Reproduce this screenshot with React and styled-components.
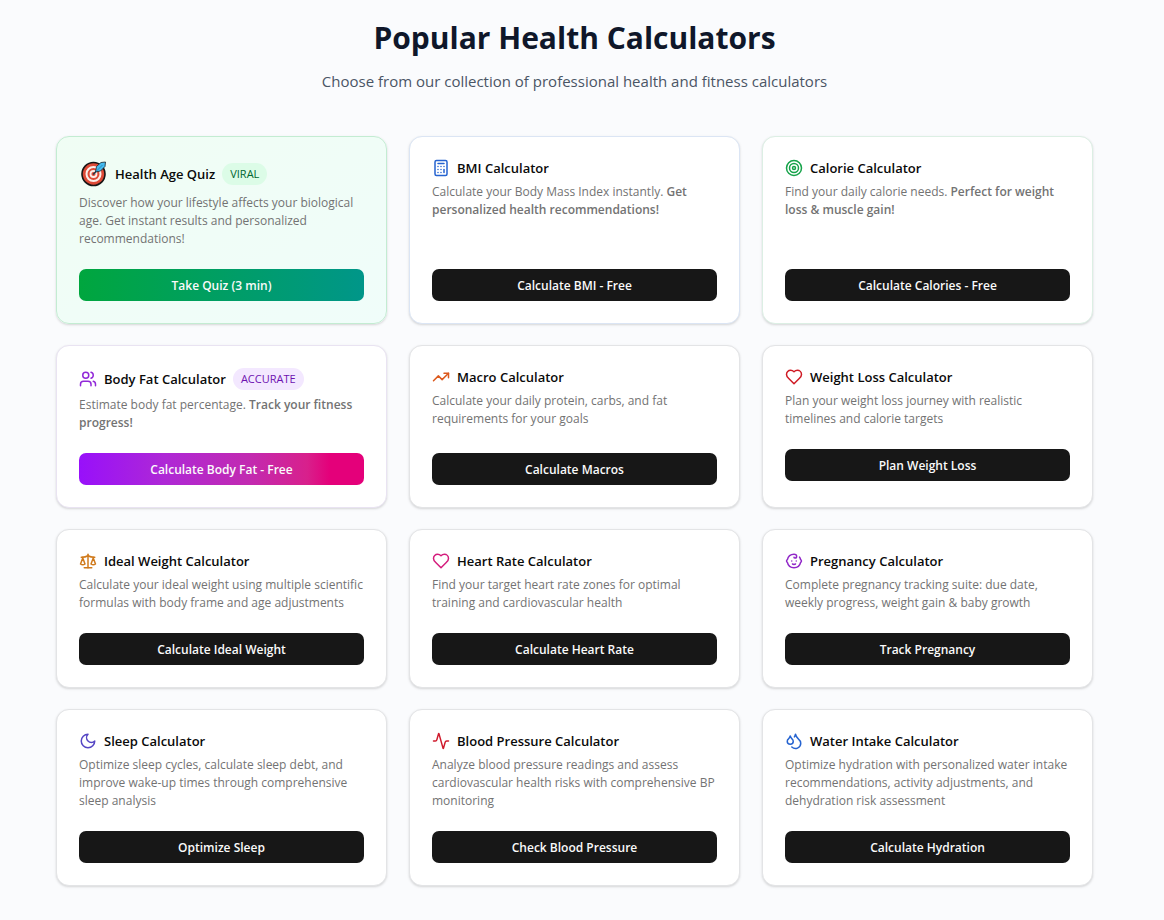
import styled, { createGlobalStyle } from "styled-components";
import {
  Activity,
  Baby,
  Calculator,
  Droplets,
  Scale,
  Target,
  TrendingUp,
  Users,
} from "lucide-react";

const GlobalStyle = createGlobalStyle`
  *, *::before, *::after {
    box-sizing: border-box;
  }

  body {
    margin: 0;
    min-height: 100vh;
    background: #fafbfd;
    font-family: "Segoe UI", "Open Sans", "Noto Sans", sans-serif;
  }
`;

const Section = styled.section`
  padding: 16px 71px 34px 56px;
`;

const Header = styled.header`
  margin-bottom: 43px;
  text-align: center;
`;

const Heading = styled.h2`
  margin: 0 0 9px;
  color: #0f172a;
  font-size: 30px;
  font-weight: 700;
  line-height: 44px;
`;

const Lead = styled.p`
  margin: 0;
  color: #4a5565;
  font-size: 15px;
  line-height: 24px;
`;

const Grid = styled.div`
  display: grid;
  grid-template-columns: repeat(3, minmax(0, 1fr));
  gap: 21px 22px;

  @media (max-width: 900px) {
    grid-template-columns: repeat(2, minmax(0, 1fr));
  }

  @media (max-width: 600px) {
    grid-template-columns: minmax(0, 1fr);
  }
`;

const Card = styled.article`
  display: flex;
  flex-direction: column;
  gap: 21px;
  padding: 22px;
  border: 1px solid ${(p) => p.$border || "#e3e4e6"};
  border-radius: 13px;
  background: ${(p) => p.$background || "#ffffff"};
  box-shadow: 0 1px 3px rgba(0, 0, 0, 0.1), 0 1px 2px rgba(0, 0, 0, 0.06);
`;

const CardText = styled.div`
  display: flex;
  flex-direction: column;
  gap: 6px;
  flex: ${(p) => (p.$grow ? 1 : "none")};
`;

const TitleRow = styled.h3`
  display: flex;
  align-items: center;
  gap: 7px;
  margin: 0;
  color: #0a0a0a;
  font-size: 13px;
  font-weight: 600;
  line-height: 18px;

  svg {
    flex: none;
  }
`;

const Badge = styled.span`
  padding: 2px 8px;
  border-radius: 11px;
  background: ${(p) => p.$background};
  color: ${(p) => p.$color};
  font-size: 11px;
  font-weight: 500;
  line-height: 18px;
`;

const Description = styled.p`
  margin: 0;
  color: #737373;
  font-size: 12px;
  line-height: 18px;

  strong {
    font-weight: 600;
  }
`;

const Button = styled.button`
  height: 32px;
  padding: 1px 14px 0;
  border: 0;
  border-radius: 7px;
  background: ${(p) => p.$background || "#171717"};
  color: #fafafa;
  font-family: inherit;
  font-size: 12px;
  font-weight: 600;
  line-height: 18px;
  cursor: pointer;
`;

function Heart({ color }) {
  return (
    <svg
      width="18"
      height="18"
      viewBox="0 0 24 24"
      fill="none"
      stroke={color}
      strokeWidth="2"
      strokeLinecap="round"
      strokeLinejoin="round"
    >
      <path d="M19 14c1.49-1.46 3-3.21 3-5.5A5.5 5.5 0 0 0 16.5 3c-1.76 0-3 .5-4.5 2-1.5-1.5-2.74-2-4.5-2A5.5 5.5 0 0 0 2 8.5c0 2.3 1.5 4.05 3 5.5l7 7Z" />
    </svg>
  );
}

function Moon({ color }) {
  return (
    <svg
      width="18"
      height="18"
      viewBox="0 0 24 24"
      fill="none"
      stroke={color}
      strokeWidth="2"
      strokeLinecap="round"
      strokeLinejoin="round"
    >
      <path d="M12 3a6 6 0 0 0 9 9 9 9 0 1 1-9-9Z" />
    </svg>
  );
}

function Bullseye() {
  return (
    <svg width="29" height="29" viewBox="0 0 29 29">
      <circle cx="14.5" cy="15" r="11.5" fill="#dd4a37" stroke="#161616" strokeWidth="1.6" />
      <circle cx="14.5" cy="15" r="7" fill="none" stroke="#fbeeea" strokeWidth="2" />
      <circle cx="14.5" cy="15" r="3" fill="none" stroke="#fbeeea" strokeWidth="1.8" />
      <path d="M14.5 15 19 10.5" stroke="#1b3a4d" strokeWidth="1.4" strokeLinecap="round" />
      <path
        d="M16.5 13 17.5 7.5 22 3.500 26.500 3 26 7.500 21.500 12Z"
        fill="#45baf0"
        stroke="#17242c"
        strokeWidth="0.8"
        strokeLinejoin="round"
      />
      <path d="M17.5 12 23.5 6" stroke="#1c7fb2" strokeWidth="0.8" />
    </svg>
  );
}

const calculators = [
  {
    title: "Health Age Quiz",
    icon: <Bullseye />,
    badge: { text: "VIRAL", background: "#dcfce7", color: "#016630" },
    description:
      "Discover how your lifestyle affects your biological age. Get instant results and personalized recommendations!",
    action: "Take Quiz (3 min)",
    border: "#c3ecd2",
    background: "linear-gradient(to bottom right, #f0fdf4, #f0fdfa)",
    buttonBackground: "linear-gradient(to right, #00a63e, #009689)",
  },
  {
    title: "BMI Calculator",
    icon: <Calculator size={18} color="#2563d0" />,
    description: "Calculate your Body Mass Index instantly.",
    highlight: "Get personalized health recommendations!",
    action: "Calculate BMI - Free",
    border: "#dbe5f4",
  },
  {
    title: "Calorie Calculator",
    icon: <Target size={18} color="#16a34a" />,
    description: "Find your daily calorie needs.",
    highlight: "Perfect for weight loss & muscle gain!",
    action: "Calculate Calories - Free",
    border: "#dcefe4",
  },
  {
    title: "Body Fat Calculator",
    icon: <Users size={18} color="#9128d8" />,
    badge: { text: "ACCURATE", background: "#f3e8ff", color: "#6e11b0" },
    description: "Estimate body fat percentage.",
    highlight: "Track your fitness progress!",
    action: "Calculate Body Fat - Free",
    border: "#e9e3f2",
    buttonBackground:
      "linear-gradient(to right, #9810fa, #ae28d6 30%, #c22ab0 60%, #d8208c 80%, #e4007a 88%)",
  },
  {
    title: "Macro Calculator",
    icon: <TrendingUp size={18} color="#dc5a1e" />,
    description: "Calculate your daily protein, carbs, and fat requirements for your goals",
    action: "Calculate Macros",
  },
  {
    title: "Weight Loss Calculator",
    icon: <Heart color="#cf1a24" />,
    description: "Plan your weight loss journey with realistic timelines and calorie targets",
    action: "Plan Weight Loss",
    compact: true,
  },
  {
    title: "Ideal Weight Calculator",
    icon: <Scale size={18} color="#d07a1c" />,
    description:
      "Calculate your ideal weight using multiple scientific formulas with body frame and age adjustments",
    action: "Calculate Ideal Weight",
  },
  {
    title: "Heart Rate Calculator",
    icon: <Heart color="#d41c7c" />,
    description: "Find your target heart rate zones for optimal training and cardiovascular health",
    action: "Calculate Heart Rate",
  },
  {
    title: "Pregnancy Calculator",
    icon: <Baby size={18} color="#9128c8" />,
    description:
      "Complete pregnancy tracking suite: due date, weekly progress, weight gain & baby growth",
    action: "Track Pregnancy",
  },
  {
    title: "Sleep Calculator",
    icon: <Moon color="#5546c4" />,
    description:
      "Optimize sleep cycles, calculate sleep debt, and improve wake-up times through comprehensive sleep analysis",
    action: "Optimize Sleep",
  },
  {
    title: "Blood Pressure Calculator",
    icon: <Activity size={18} color="#cf1a2c" />,
    description:
      "Analyze blood pressure readings and assess cardiovascular health risks with comprehensive BP monitoring",
    action: "Check Blood Pressure",
  },
  {
    title: "Water Intake Calculator",
    icon: <Droplets size={18} color="#2563d0" />,
    description:
      "Optimize hydration with personalized water intake recommendations, activity adjustments, and dehydration risk assessment",
    action: "Calculate Hydration",
  },
];

function CalculatorCard({ item }) {
  return (
    <Card $border={item.border} $background={item.background}>
      <CardText $grow={!item.compact}>
        <TitleRow>
          {item.icon}
          {item.title}
          {item.badge && (
            <Badge $background={item.badge.background} $color={item.badge.color}>
              {item.badge.text}
            </Badge>
          )}
        </TitleRow>
        <Description>
          {item.description} {item.highlight && <strong>{item.highlight}</strong>}
        </Description>
      </CardText>
      <Button type="button" $background={item.buttonBackground}>
        {item.action}
      </Button>
    </Card>
  );
}

export default function App() {
  return (
    <>
      <GlobalStyle />
      <Section>
        <Header>
          <Heading>Popular Health Calculators</Heading>
          <Lead>Choose from our collection of professional health and fitness calculators</Lead>
        </Header>
        <Grid>
          {calculators.map((item) => (
            <CalculatorCard key={item.title} item={item} />
          ))}
        </Grid>
      </Section>
    </>
  );
}
